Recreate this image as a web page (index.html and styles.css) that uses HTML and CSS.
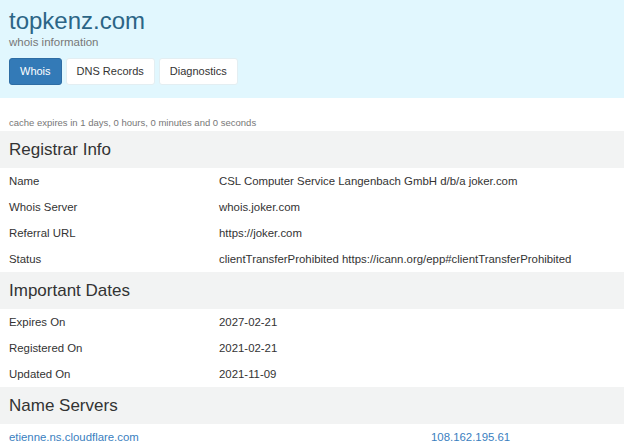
FILE: index.html
```html
<!DOCTYPE html>
<html lang="en">
<head>
    <meta charset="UTF-8">
    <meta name="viewport" content="width=device-width, initial-scale=1.0">
    <title>topkenz.com whois information</title>
    <link rel="stylesheet" href="styles.css">
</head>
<body>
    <header class="page-header">
        <h1>topkenz.com</h1>
        <p class="subtitle">whois information</p>
        <nav class="tabs">
            <a class="tab active" href="#">Whois</a>
            <a class="tab" href="#">DNS Records</a>
            <a class="tab" href="#">Diagnostics</a>
        </nav>
    </header>

    <p class="cache-note">cache expires in 1 days, 0 hours, 0 minutes and 0 seconds</p>

    <!-- registrar -->
    <section class="info-block">
        <h2 class="block-title">Registrar Info</h2>
        <div class="row"><span>Name</span><span>CSL Computer Service Langenbach GmbH d/b/a joker.com</span></div>
        <div class="row"><span>Whois Server</span><span>whois.joker.com</span></div>
        <div class="row"><span>Referral URL</span><span>https://joker.com</span></div>
        <div class="row"><span>Status</span><span>clientTransferProhibited https://icann.org/epp#clientTransferProhibited</span></div>
    </section>

    <!-- dates -->
    <section class="info-block">
        <h2 class="block-title">Important Dates</h2>
        <div class="row"><span>Expires On</span><span>2027-02-21</span></div>
        <div class="row"><span>Registered On</span><span>2021-02-21</span></div>
        <div class="row"><span>Updated On</span><span>2021-11-09</span></div>
    </section>

    <!-- name servers -->
    <section class="info-block">
        <h2 class="block-title">Name Servers</h2>
        <div class="row ns-row"><a href="#">etienne.ns.cloudflare.com</a><a href="#">108.162.195.61</a></div>
    </section>
</body>
</html>
```

FILE: styles.css
```css
* {
    margin: 0;
    padding: 0;
    box-sizing: border-box;
}

body {
    font-family: "Liberation Sans", Arial, sans-serif;
    background: #fff;
    color: #333;
}

/* header */
.page-header {
    height: 98px;
    background: #e1f7fe;
    padding: 7px 9px 0;
}

.page-header h1 {
    font-size: 24px;
    font-weight: normal;
    line-height: 28px;
    color: #2b6586;
}

.subtitle {
    font-size: 11.5px;
    line-height: 14px;
    color: #777;
}

.tabs {
    display: flex;
    gap: 4px;
    margin-top: 9px;
}

.tab {
    display: block;
    height: 27px;
    line-height: 25px;
    padding: 0 10px;
    font-size: 11px;
    color: #333;
    text-decoration: none;
    background: #fff;
    border: 1px solid #e3eef2;
    border-radius: 3px;
}

.tab.active {
    background: #337ab7;
    border-color: #2e6da4;
    color: #fff;
}

.cache-note {
    font-size: 9.5px;
    line-height: 12px;
    color: #777;
    padding: 19px 9px 2px;
}

/* blocks */
.block-title {
    height: 37px;
    line-height: 37px;
    padding: 0 9px;
    font-size: 17px;
    font-weight: normal;
    background: #f2f3f3;
}

.row {
    display: grid;
    grid-template-columns: 210px 1fr;
    height: 26px;
    line-height: 26px;
    padding: 0 9px;
    font-size: 11.4px;
}

.ns-row {
    grid-template-columns: 422px 1fr;
}

.ns-row a {
    color: #3a80c0;
    text-decoration: none;
}
```
